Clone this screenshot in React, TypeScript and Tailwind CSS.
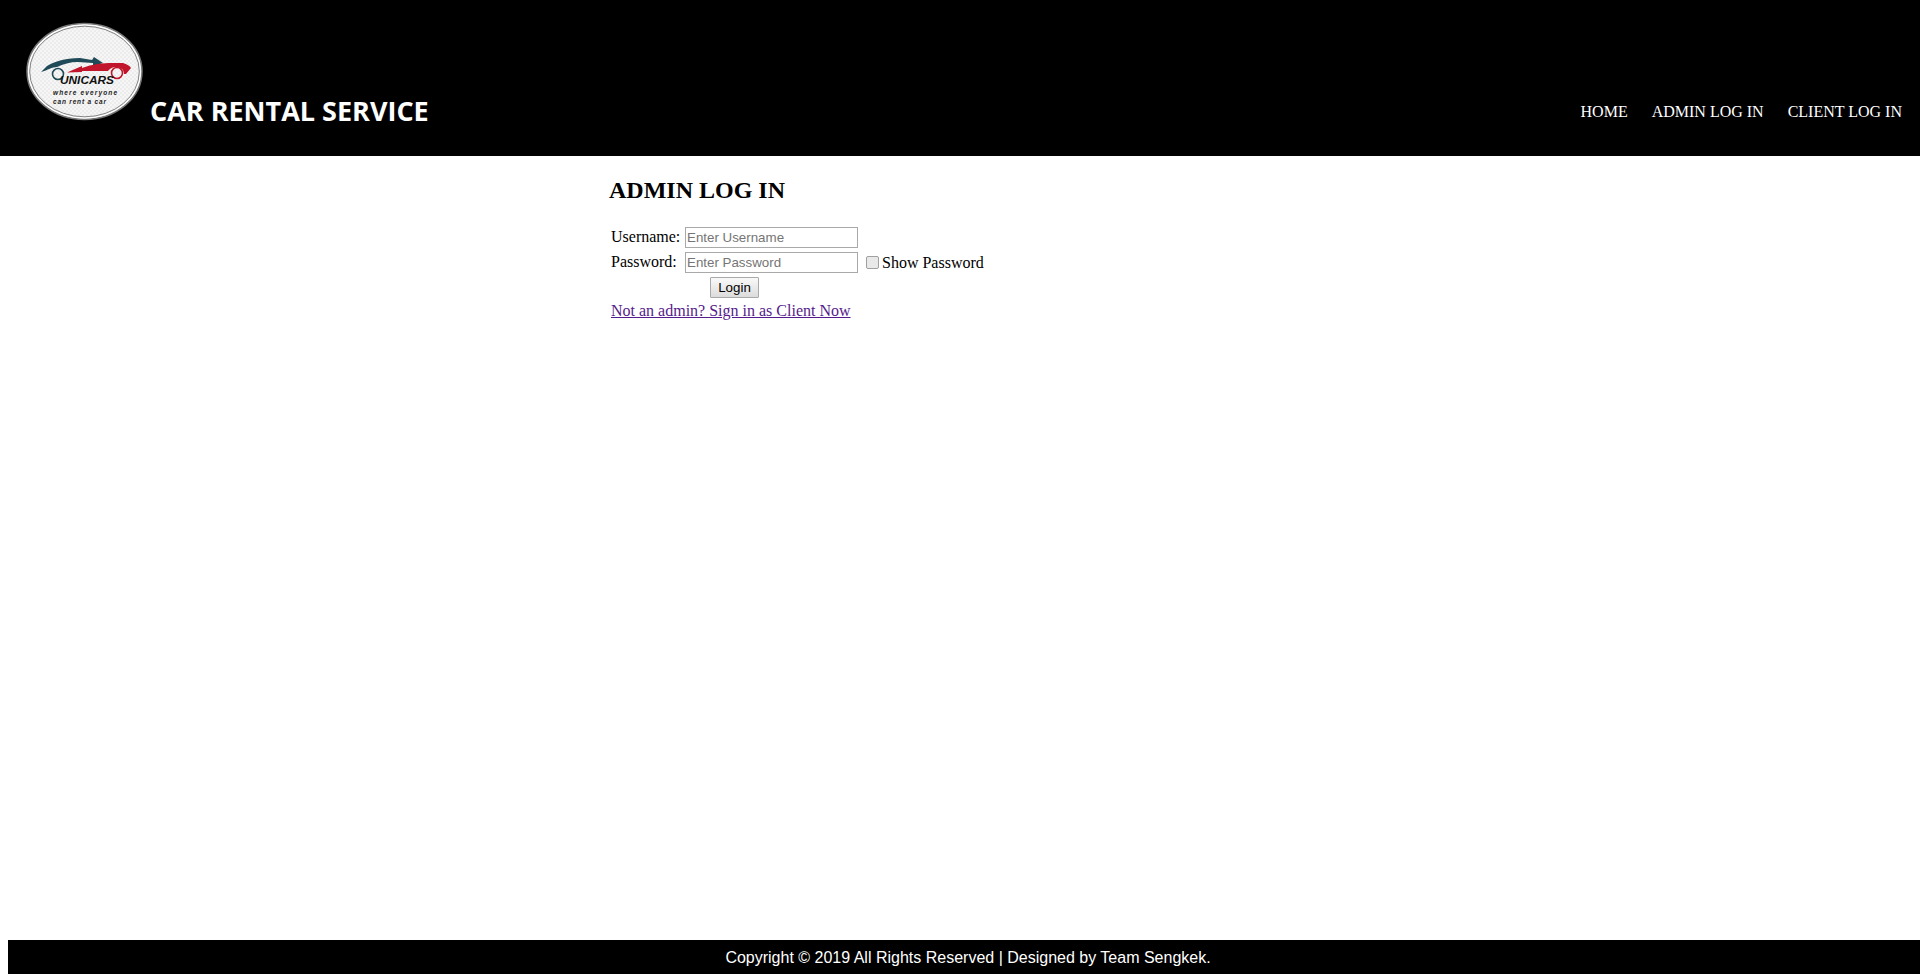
function Logo() {
  return (
    <svg viewBox="25 22 120 100" className="w-[120px] h-[100px] shrink-0">
      <defs>
        <pattern id="check" width="4" height="4" patternUnits="userSpaceOnUse">
          <rect width="4" height="4" fill="#f6f6f6" />
          <rect width="2" height="2" fill="#ececec" />
          <rect x="2" y="2" width="2" height="2" fill="#ececec" />
        </pattern>
      </defs>
      <ellipse cx="84.5" cy="71.5" rx="57.5" ry="48" fill="url(#check)" stroke="#777777" strokeWidth="1.5" />
      <ellipse cx="84.5" cy="71.5" rx="56" ry="46.5" fill="none" stroke="#ffffff" strokeWidth="1" />
      <ellipse cx="84.5" cy="71.5" rx="54.8" ry="45.3" fill="none" stroke="#555555" strokeWidth="0.7" />
      <path d="M41 72 L47 66 C54 62 64 58 80 58 L92 60 L94 57 L103 63 L93 66 L93 63 L78 62 C70 62 63 64 57 67 C52 67 48 70 41 72 Z" fill="#1f4a57" />
      <circle cx="58" cy="74" r="5.5" fill="none" stroke="#1f4a57" strokeWidth="1.6" />
      <path d="M67 72.5 L82 66 L82 68 C92 64 104 63 112 63 L123 63 C127 64 130 66 131 68 L126 74 L124 74 C124 69 120 67 116 67 C111 67 109 70 108 71 L82 71 L82 72 Z" fill="#c0152a" />
      <circle cx="117" cy="73" r="5.5" fill="none" stroke="#c0152a" strokeWidth="1.6" />
      <text x="60" y="84" fontFamily="Liberation Sans, sans-serif" fontSize="10" fontWeight="700" fontStyle="italic" fill="#111" textLength="54" lengthAdjust="spacingAndGlyphs">UNICARS</text>
      <text x="53" y="95" fontFamily="Liberation Sans, sans-serif" fontSize="6.5" fontWeight="700" fontStyle="italic" fill="#222" textLength="64">where everyone</text>
      <text x="53" y="103.5" fontFamily="Liberation Sans, sans-serif" fontSize="6.5" fontWeight="700" fontStyle="italic" fill="#222" textLength="53">can rent a car</text>
    </svg>
  )
}

export default function App() {
  return (
    <div className="min-h-screen flex flex-col overflow-hidden bg-white text-black font-['Liberation_Serif',serif] text-base">
      <header className="h-[156px] bg-black flex items-start justify-between text-white">
        <div className="flex items-start pl-[25px] pt-[22px]">
          <Logo />
          <h1 className="ml-[5px] mt-[70px] font-['Open_Sans',sans-serif] text-[27px] leading-[38px] font-bold whitespace-nowrap">
            CAR RENTAL SERVICE
          </h1>
        </div>
        <nav className="flex gap-[24px] pr-[18px] pt-[103px] leading-[18px]">
          <a href="#">HOME</a>
          <a href="#">ADMIN LOG IN</a>
          <a href="#">CLIENT LOG IN</a>
        </nav>
      </header>

      <main className="flex-1 pl-[609px]">
        <h2 className="mt-[20px] text-2xl leading-[28px] font-bold">ADMIN LOG IN</h2>
        <form className="mt-[23px] pl-[2px] flex flex-col gap-[4px]">
          <div className="flex items-center h-[21px]">
            <label className="w-[74px] -mt-[2px]">Username:</label>
            <input
              placeholder="Enter Username"
              className="w-[173px] h-[21px] border border-[#a9a9a9] px-[1px] font-['Liberation_Sans',sans-serif] text-[13.33px] placeholder:text-[#757575] outline-none"
            />
          </div>
          <div className="flex items-center h-[21px]">
            <label className="w-[74px] -mt-[2px]">Password:</label>
            <input
              type="password"
              placeholder="Enter Password"
              className="w-[173px] h-[21px] border border-[#a9a9a9] px-[1px] font-['Liberation_Sans',sans-serif] text-[13.33px] placeholder:text-[#757575] outline-none"
            />
            <input
              type="checkbox"
              className="ml-[8px] w-[13px] h-[13px] appearance-none rounded-[2px] border border-[#a0a0a0] bg-[#e9e9e9]"
            />
            <span className="ml-[3px]">Show Password</span>
          </div>
          <div className="flex h-[21px] pl-[99px]">
            <button
              type="button"
              className="w-[49px] h-[21px] border border-[#a9a9a9] rounded-[1px] bg-gradient-to-b from-[#f9f9f9] to-[#dcdcdc] font-['Liberation_Sans',sans-serif] text-[13.33px] leading-none"
            >
              Login
            </button>
          </div>
          <a href="#" className="leading-[18px] underline text-[#551a8b]">
            Not an admin? Sign in as Client Now
          </a>
        </form>
      </main>

      <footer className="ml-2 w-full h-[34px] bg-black text-white text-center font-['Liberation_Sans',sans-serif] text-base leading-[36px]">
        Copyright © 2019 All Rights Reserved | Designed by Team Sengkek.
      </footer>
    </div>
  )
}
